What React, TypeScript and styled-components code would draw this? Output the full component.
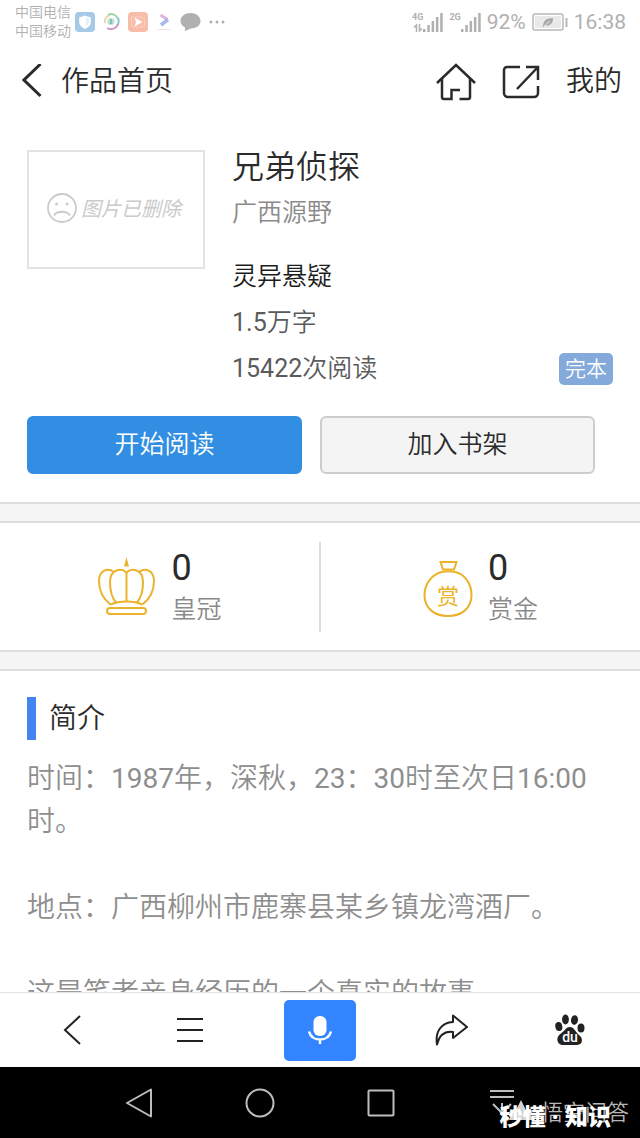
import React from "react";
import styled, { createGlobalStyle } from "styled-components";

const GlobalStyle = createGlobalStyle`
  *, *::before, *::after { box-sizing: border-box; }
  body {
    margin: 0;
    background: #fff;
    color: #2b2b2b;
    font-family: Roboto, "Noto Sans CJK SC", sans-serif;
    font-weight: 350;
  }
  h1, h2, p, dl, dd, dt { margin: 0; font-weight: inherit; }
  button { font: inherit; color: inherit; padding: 0; border: 0; background: none; cursor: pointer; }
  a { color: inherit; text-decoration: none; }
  svg { display: block; flex: none; }
`;

const Screen = styled.div`
  height: 100vh;
  display: flex;
  flex-direction: column;
  overflow: hidden;
`;

const StatusBar = styled.div`
  flex: none;
  height: 44px;
  padding: 0 14px 0 15px;
  display: flex;
  align-items: center;
  justify-content: space-between;
  color: #b0b0b0;
`;

const StatusGroup = styled.div<{ $gap: number }>`
  display: flex;
  align-items: center;
  gap: ${(p) => p.$gap}px;
`;

const Carriers = styled.div`
  font-size: 14px;
  line-height: 19px;
`;

const Num = styled.span`
  font-weight: 400;
`;

const StatusText = styled(Num)`
  font-size: 21px;
  line-height: 24px;
`;

const SignalBox = styled.div`
  display: flex;
  align-items: flex-end;
  height: 20px;
`;

const SignalLabel = styled.span`
  align-self: flex-start;
  display: flex;
  flex-direction: column;
  align-items: center;
  gap: 2px;
  font-size: 9px;
  line-height: 10px;
  font-weight: 700;
`;

const Header = styled.header`
  flex: none;
  height: 74px;
  padding: 2px 18px 0 22px;
  display: flex;
  align-items: center;
  justify-content: space-between;
  font-size: 28px;
  line-height: 40px;
`;

const BackLink = styled.button`
  display: flex;
  align-items: center;
  gap: 19px;
`;

const HeaderActions = styled.nav`
  display: flex;
  align-items: center;
  gap: 26px;
`;

const Content = styled.main`
  flex: 1;
  min-height: 0;
  overflow: hidden;
`;

const Book = styled.section`
  padding: 26px 27px 0;
  display: flex;
  gap: 27px;
`;

const Cover = styled.div`
  flex: none;
  width: 178px;
  height: 119px;
  margin-top: 6px;
  padding: 0 4px 4px 0;
  border: 2px solid #e3e3e3;
  display: flex;
  align-items: center;
  justify-content: center;
  gap: 4px;
  color: #cbcbcb;
  font-size: 20px;
  font-style: italic;
  font-weight: 400;
`;

const Info = styled.div`
  flex: 1;
  font-size: 25px;
  line-height: 46px;
`;

const Title = styled.h1`
  font-size: 32px;
`;

const Author = styled.p`
  color: #8a8a8a;
  margin-bottom: 18px;
`;

const Genre = styled.p`
  color: #1c1c1c;
`;

const Meta = styled.div`
  display: flex;
  align-items: center;
  justify-content: space-between;
  color: #5b5b5b;
`;

const Tag = styled.span`
  padding: 0 6px;
  border-radius: 5px;
  background: #83aada;
  color: #fff;
  font-size: 21px;
  line-height: 32px;
`;

const Actions = styled.div`
  padding: 24px 45px 28px 27px;
  display: flex;
  gap: 18px;
`;

const ActionButton = styled.button<{ $primary?: boolean }>`
  flex: 1;
  height: 58px;
  padding-bottom: 7px;
  border-radius: 6px;
  border: 2px solid ${(p) => (p.$primary ? "#328ee2" : "#cdcdcd")};
  background: ${(p) => (p.$primary ? "#328ee2" : "#f4f4f4")};
  color: ${(p) => (p.$primary ? "#fff" : "#2b2b2b")};
  font-size: 25px;
`;

const Band = styled.div`
  height: 21px;
  background: #f5f5f5;
  border: solid #dedede;
  border-width: 2px 0;
`;

const Stats = styled.section`
  height: 127px;
  display: flex;
  align-items: center;
`;

const Stat = styled.div`
  flex: 1;
  display: flex;
  align-items: center;
  justify-content: center;
  gap: 15px;
`;

const StatDivider = styled.div`
  width: 2px;
  height: 90px;
  background: #dedede;
`;

const StatText = styled.dl`
  padding-top: 4px;
  display: flex;
  flex-direction: column-reverse;
  dt { font-size: 25px; line-height: 42px; color: #8a8a8a; }
  dd { font-size: 36px; line-height: 42px; font-weight: 400; }
`;

const Intro = styled.section`
  padding: 26px 27px 0;
`;

const IntroTitle = styled.h2`
  border-left: 9px solid #4385f0;
  padding-left: 13px;
  margin-bottom: 17px;
  font-size: 28px;
  line-height: 43px;
`;

const IntroText = styled.p`
  margin-bottom: 43px;
  font-size: 28px;
  line-height: 43px;
  color: #8e8e8e;
`;

const Toolbar = styled.nav`
  flex: none;
  height: 75px;
  border-top: 1px solid #e2e2e2;
  background: #fff;
  display: grid;
  grid-template-columns: 144fr 92fr 168fr 96fr 140fr;
  place-items: center;
`;

const MicButton = styled.button`
  width: 72px;
  height: 61px;
  border-radius: 5px;
  background: #3385ff;
  display: flex;
  align-items: center;
  justify-content: center;
`;

const SystemNav = styled.nav`
  flex: none;
  position: relative;
  height: 71px;
  padding: 0 78px;
  background: #000;
  display: grid;
  grid-template-columns: repeat(4, 1fr);
  place-items: center;
`;

const BrandMark = styled.div`
  position: absolute;
  right: 11px;
  bottom: 11px;
  display: flex;
  align-items: center;
  gap: 8px;
  color: #b8b8b8;
  font-size: 22px;
  line-height: 28px;
`;

const ChannelMark = styled.div`
  position: absolute;
  right: 29px;
  bottom: 6px;
  display: flex;
  gap: 6px;
  color: #fff;
  font-size: 23px;
  line-height: 28px;
  font-weight: 900;
`;

function Signal({ label, data }: { label: string; data?: boolean }) {
  return (
    <SignalBox>
      <SignalLabel>
        {label}
        {data && (
          <svg width="10" height="8" viewBox="0 0 10 8" fill="none" stroke="#b0b0b0" strokeWidth="1.5">
            <path d="M3.500 8V1L1 3.500M6.500 0v7L9 4.500" />
          </svg>
        )}
      </SignalLabel>
      <svg width="20" height="20" viewBox="0 0 20 20" fill="#b0b0b0">
        <path d="M0 17h2.500v3H0zM4.300 13h2.500v7H4.300zM8.600 9h2.500v11H8.600zM12.900 5h2.500v15h-2.500zM17.200 1h2.500v19h-2.500z" />
      </svg>
    </SignalBox>
  );
}

function StatusIcons() {
  return (
    <>
      <svg width="20" height="20" viewBox="0 0 20 20">
        <rect width="20" height="20" rx="4" fill="#a5c9e7" />
        <path d="M10 3.500 15.800 5.500V10c0 3.400-2.700 5.500-5.800 7-3.100-1.500-5.800-3.600-5.800-7V5.500z" fill="#fff" />
        <path d="M11 5.500 14 6.500V10c0 1.800-1.200 3.200-3 4.300z" fill="#e4f0fa" />
      </svg>
      <svg width="17" height="18" viewBox="0 0 17 18" fill="none" strokeWidth="2">
        <path d="M2 10A7 7 0 0 1 6 2.500" stroke="#ecd9b0" />
        <path d="M5 2A7 7 0 0 1 15 6" stroke="#9fd3a8" />
        <path d="M15 5a8 8 0 0 1-1 8" stroke="#8ec6cf" />
        <path d="M15 11a7.500 7.500 0 0 1-11 4" stroke="#d898c9" />
        <circle cx="8" cy="8.500" r="3.500" fill="#b9e0d2" stroke="none" />
        <path d="M8 6v5" stroke="#78bda3" strokeWidth="1.500" />
      </svg>
      <svg width="20" height="20" viewBox="0 0 20 20">
        <rect width="20" height="20" rx="4" fill="#f8bda8" />
        <path d="M3.500 5h11a2 2 0 0 1 2 2v6a2 2 0 0 1-2 2h-9a2 2 0 0 1-2-2z" fill="none" stroke="#fad0c1" />
        <path d="M6.500 5.500 14.500 10l-8 4.500 1.500-4.500z" fill="#fff" />
      </svg>
      <svg width="16" height="18" viewBox="0 0 16 18" fill="none">
        <path d="m4.500 2 7 4.500" stroke="#e0b3dc" strokeWidth="3" />
        <path d="M12 6.500 5 12" stroke="#adb6ec" strokeWidth="3.500" />
        <path d="M1 16.500h14" stroke="#f8dfe9" />
      </svg>
      <svg width="21" height="20" viewBox="0 0 21 20" fill="#b0b0b0">
        <path d="M10.500 1C16 1 20.500 4.400 20.500 9S16 16.500 11 16.500L5 19v-3.500C2.500 14 .5 12 .5 9c0-4.600 4.500-8 10-8z" />
      </svg>
      <svg width="16" height="4" viewBox="0 0 16 4" fill="#b0b0b0">
        <circle cx="2" cy="2" r="1.500" />
        <circle cx="8" cy="2" r="1.500" />
        <circle cx="14" cy="2" r="1.500" />
      </svg>
    </>
  );
}

export default function App() {
  return (
    <Screen>
      <GlobalStyle />
      <StatusBar>
        <StatusGroup $gap={4}>
          <Carriers>
            中国电信
            <br />
            中国移动
          </Carriers>
          <StatusGroup $gap={8}>
            <StatusIcons />
          </StatusGroup>
        </StatusGroup>
        <StatusGroup $gap={6}>
          <Signal label="4G" data />
          <Signal label="2G" />
          <StatusText>92%</StatusText>
          <svg width="36" height="18" viewBox="0 0 36 18">
            <rect x="1" y="1" width="30" height="16" rx="2" fill="#fff" stroke="#b8b8b8" strokeWidth="1.500" />
            <rect x="3" y="3" width="26" height="12" fill="#e9e9e9" />
            <path d="M11 14c0-6 3-9 10-9 0 6-3 8-8 7.500L11.500 14z" fill="#a8a8a8" />
            <path d="m12 13 6-5" stroke="#e9e9e9" />
            <path d="M34.500 5v9" stroke="#b8b8b8" strokeWidth="2" />
          </svg>
          <StatusText>16:38</StatusText>
        </StatusGroup>
      </StatusBar>

      <Header>
        <BackLink type="button">
          <svg width="20" height="36" viewBox="0 0 20 36" fill="none" stroke="#2b2b2b" strokeWidth="3">
            <path d="M18.500 0 2 16l16.500 16" />
          </svg>
          作品首页
        </BackLink>
        <HeaderActions>
          <a href="#home" aria-label="首页">
            <svg width="40" height="38" viewBox="0 0 40 38" fill="none" stroke="#2b2b2b" strokeWidth="2.500">
              <path d="M1 20 20 2l19 18" />
              <path d="M6 16v18a2 2 0 0 0 2 2h7.500v-9H24M34 16v18a2 2 0 0 1-2 2h-8.500" />
            </svg>
          </a>
          <a href="#share" aria-label="分享">
            <svg width="38" height="34" viewBox="0 0 38 34" fill="none" stroke="#2b2b2b" strokeWidth="2.500">
              <path d="M18 2H5a3 3 0 0 0-3 3v23a4 4 0 0 0 4 4h26a4 4 0 0 0 4-4v-7" />
              <path d="M24 2h12v13M36 2 15 24" />
            </svg>
          </a>
          <a href="#mine">我的</a>
        </HeaderActions>
      </Header>

      <Content>
        <Book>
          <Cover>
            <svg width="30" height="30" viewBox="0 0 30 30" fill="none" stroke="#cbcbcb" strokeWidth="1.800">
              <circle cx="15" cy="15" r="14" />
              <path d="M7 22.500c3-5 13-5 16 0" />
              <circle cx="9.500" cy="11" r="1.500" fill="#cbcbcb" stroke="none" />
              <circle cx="20" cy="11" r="1.500" fill="#cbcbcb" stroke="none" />
            </svg>
            图片已删除
          </Cover>
          <Info>
            <Title>兄弟侦探</Title>
            <Author>广西源野</Author>
            <Genre>灵异悬疑</Genre>
            <Meta>
              <span>
                <Num>1.5</Num>万字
              </span>
            </Meta>
            <Meta>
              <span>
                <Num>15422</Num>次阅读
              </span>
              <Tag>完本</Tag>
            </Meta>
          </Info>
        </Book>
        <Actions>
          <ActionButton type="button" $primary>开始阅读</ActionButton>
          <ActionButton type="button">加入书架</ActionButton>
        </Actions>

        <Band />
        <Stats>
          <Stat>
            <svg width="59" height="60" viewBox="0 0 59 60" fill="none" stroke="#ebb32b" strokeWidth="2">
              <path d="M29.500 0 32 9.500h-5z" fill="#ebb32b" stroke="none" />
              <path d="M29.500 15v30M29.500 16c-3-5.500-16.500-5-16.500 9 0 9 2.500 16.500 6 20.500M29.500 16c3-5.500 16.500-5 16.500 9 0 9-2.500 16.500-6 20.500" />
              <path d="M17 15C10 10 2 14 2 24c0 10 5 18.500 11.500 23.500M42 15c7-5 15-1 15 9 0 10-5 18.500-11.500 23.500" />
              <path d="M13.500 47.500c9-4 23-4 32 0" />
              <rect x="10" y="51" width="39" height="6" rx="3" />
            </svg>
            <StatText>
              <dt>皇冠</dt>
              <dd>0</dd>
            </StatText>
          </Stat>
          <StatDivider />
          <Stat>
            <svg width="50" height="62" viewBox="0 0 50 62" fill="none" stroke="#ebb32b" strokeWidth="2">
              <path d="M17.500 6h16l-2.500 7.500H20z" />
              <path d="M19 16C9 18 1.500 28 1.500 39 1.500 52 11 60 25 60s23.500-8 23.500-21C48.500 28 42 18 32 16c-4-1-9-1-13 0z" />
              <text x="25" y="48" fontSize="22" fontWeight="400" textAnchor="middle" fill="#ebb32b" stroke="none">赏</text>
            </svg>
            <StatText>
              <dt>赏金</dt>
              <dd>0</dd>
            </StatText>
          </Stat>
        </Stats>
        <Band />

        <Intro>
          <IntroTitle>简介</IntroTitle>
          <IntroText>
            时间：<Num>1987</Num>年，深秋，<Num>23</Num>：<Num>30</Num>时至次日<Num>16:00</Num>时。
          </IntroText>
          <IntroText>地点：广西柳州市鹿寨县某乡镇龙湾酒厂。</IntroText>
          <IntroText>这是笔者亲身经历的一个真实的故事</IntroText>
        </Intro>
      </Content>

      <Toolbar>
        <button type="button" aria-label="后退">
          <svg width="18" height="30" viewBox="0 0 18 30" fill="none" stroke="#222" strokeWidth="2">
            <path d="M17 1 2 15l15 14" />
          </svg>
        </button>
        <button type="button" aria-label="菜单">
          <svg width="28" height="26" viewBox="0 0 28 26" fill="none" stroke="#222" strokeWidth="2">
            <path d="M1 2h26M1 13h26M1 24h26" />
          </svg>
        </button>
        <MicButton type="button" aria-label="语音">
          <svg width="26" height="28" viewBox="0 0 26 28" fill="none" stroke="#fff" strokeWidth="2.500">
            <rect x="6.500" y="0" width="13" height="20" rx="6" fill="#fff" stroke="none" />
            <path d="M2 15.500C3.500 21 8 23.500 13 23.500S22.500 21 24 15.500M13 23v5" />
          </svg>
        </MicButton>
        <button type="button" aria-label="转发">
          <svg width="34" height="32" viewBox="0 0 34 32" fill="none" stroke="#222" strokeWidth="2" strokeLinejoin="round">
            <path d="M18 1.500 32 13 18 24v-6C9 17 4 22 2 30.500 0 18 6 8.500 18 8z" />
          </svg>
        </button>
        <button type="button" aria-label="百度">
          <svg width="30" height="32" viewBox="0 0 30 32" fill="#222">
            <ellipse cx="10.500" cy="5.500" rx="3.400" ry="5" />
            <ellipse cx="19.500" cy="6" rx="3.500" ry="4.800" transform="rotate(8 19.500 6)" />
            <ellipse cx="3.800" cy="12.500" rx="3.500" ry="4.600" transform="rotate(-10 3.800 12.500)" />
            <ellipse cx="26" cy="14" rx="3.500" ry="4.600" />
            <path d="M15 13c4 0 5 4 8 7 3 2.500 5 5 3.500 8.500-1.500 3-4.500 2.500-11.500 2.500s-9.500.5-11.500-2C1 25 3 21.500 6 19.500c4-3 5-6.500 9-6.500z" />
            <text x="15" y="28" fontSize="14" fontWeight="500" textAnchor="middle" fill="#fff">du</text>
          </svg>
        </button>
      </Toolbar>

      <SystemNav>
        <button type="button" aria-label="返回">
          <svg width="28" height="30" viewBox="0 0 28 30" fill="none" stroke="#bdbdbd" strokeWidth="2" strokeLinejoin="round">
            <path d="M26 1.500v27L2 15z" />
          </svg>
        </button>
        <button type="button" aria-label="主屏幕">
          <svg width="30" height="30" viewBox="0 0 30 30" fill="none" stroke="#bdbdbd" strokeWidth="2">
            <circle cx="15" cy="15" r="13.500" />
          </svg>
        </button>
        <button type="button" aria-label="最近任务">
          <svg width="28" height="28" viewBox="0 0 28 28" fill="none" stroke="#bdbdbd" strokeWidth="2">
            <rect x="1.500" y="1.500" width="25" height="25" rx="1" />
          </svg>
        </button>
        <button type="button" aria-label="收起">
          <svg width="24" height="28" viewBox="0 0 24 28" fill="none" stroke="#bdbdbd" strokeWidth="2">
            <path d="M0 2h24M0 8h24M12 14v13M3 15l9 9 9-9" />
          </svg>
        </button>
        <BrandMark>
          <svg width="24" height="26" viewBox="0 0 24 26" fill="#d2d2d2">
            <path d="M0 20 4 9l3 1 5-10 5 10 3-1 4 11z" />
          </svg>
          悟空问答
        </BrandMark>
        <ChannelMark>
          <span>秒懂</span>
          <span>·</span>
          <span>知识</span>
        </ChannelMark>
      </SystemNav>
    </Screen>
  );
}
